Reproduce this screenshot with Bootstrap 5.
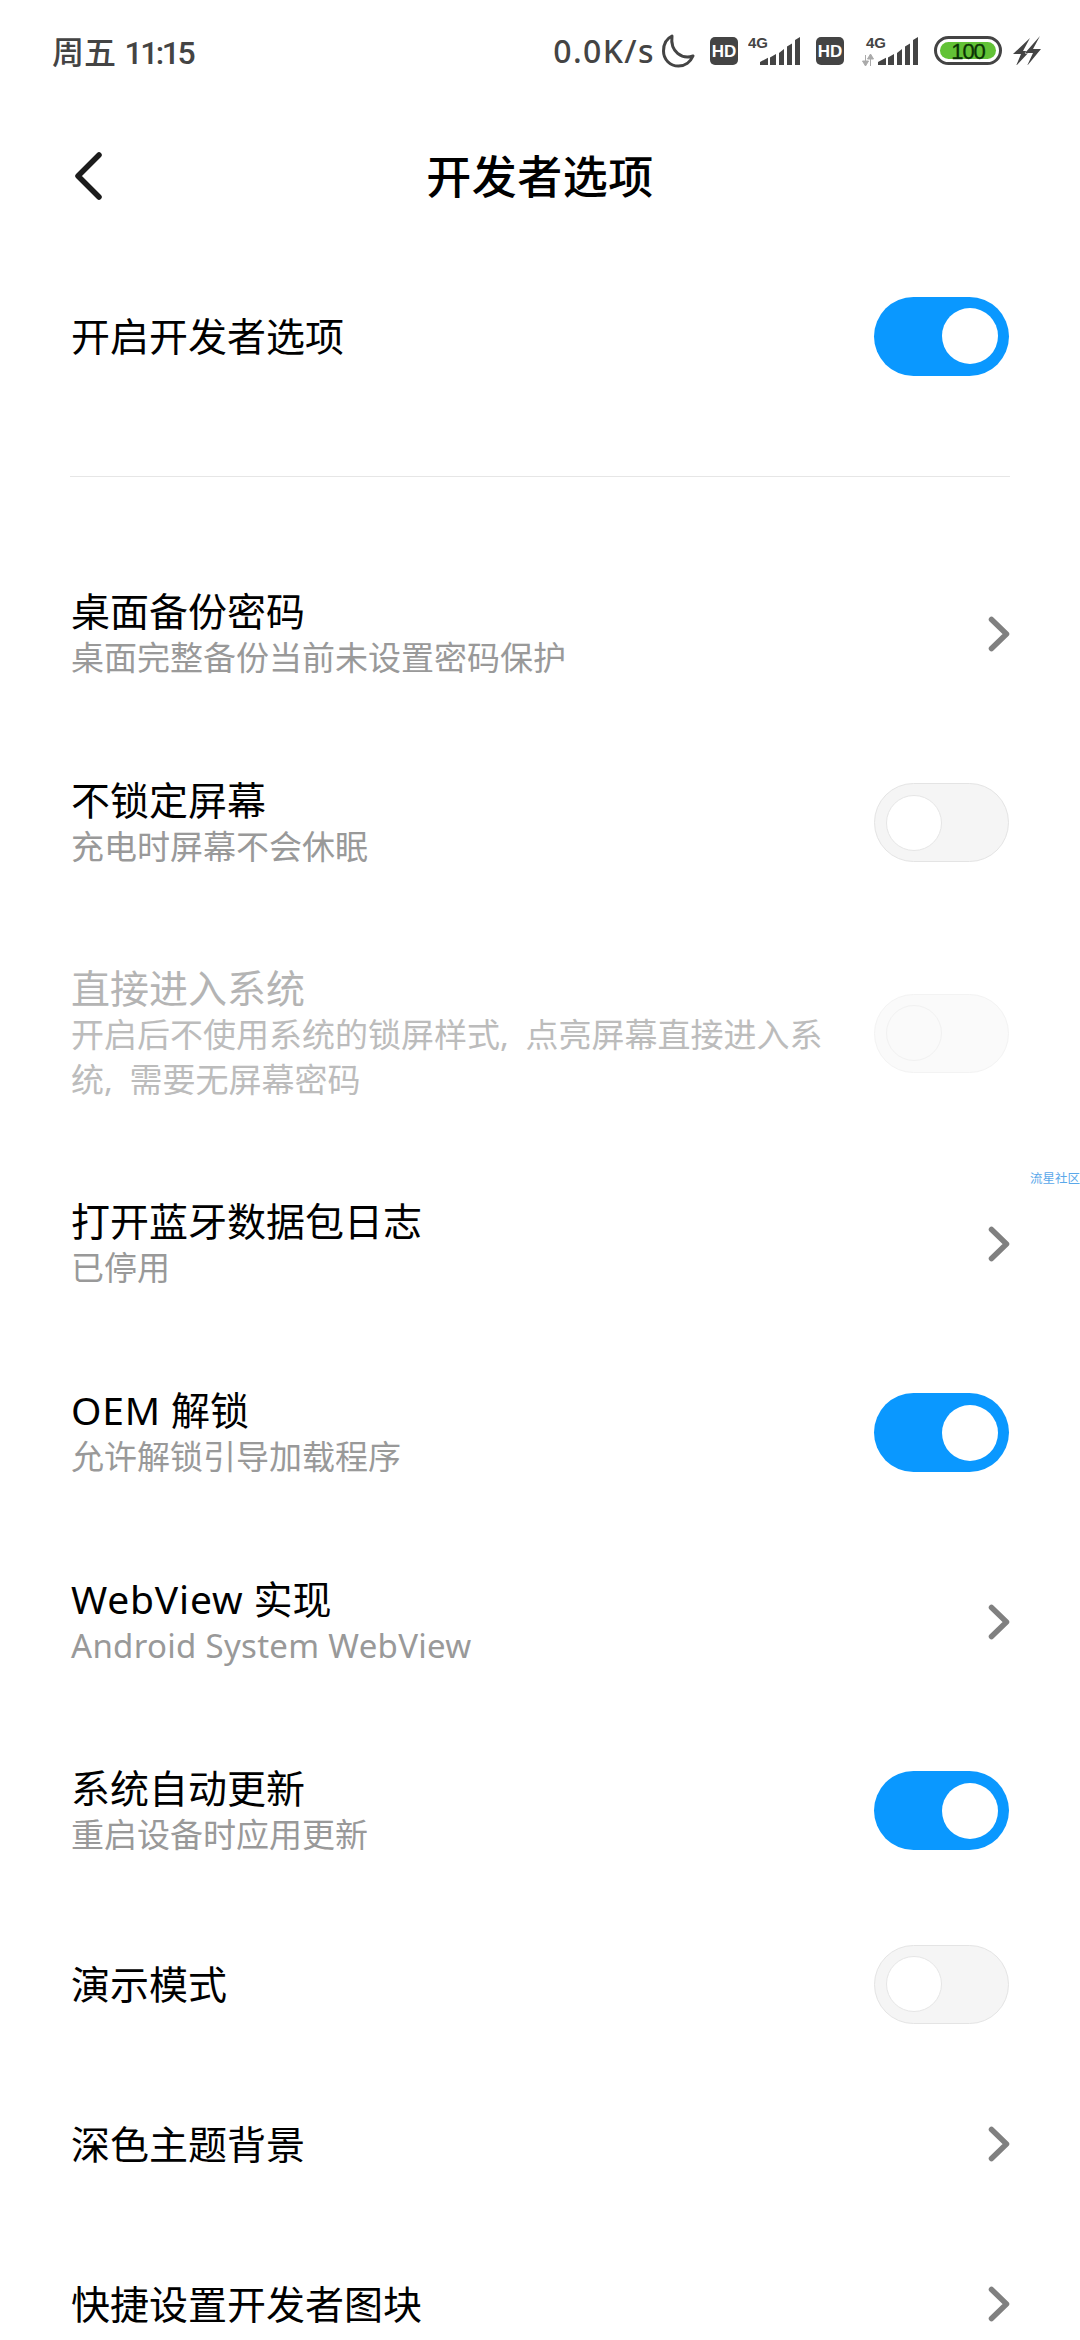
<!DOCTYPE html>
<html lang="zh-CN">
<head>
<meta charset="utf-8">
<title>开发者选项</title>
<link rel="stylesheet" href="https://cdn.jsdelivr.net/npm/bootstrap@5.3.0/dist/css/bootstrap.min.css">
<style>
html,body{height:2340px;overflow:hidden;background:#fff}
body{font-family:"Noto Sans","Noto Sans CJK SC",sans-serif;color:#000;position:relative}
.sbar{height:104px;padding:0 39px 3px 52px;color:#444}
.sbar-time{font-size:32px;font-weight:500;line-height:1;margin-top:3px}
.sbar-num{font-family:Roboto,sans-serif;letter-spacing:-2.5px;margin-left:3px}
.sbar-speed{font-size:32px;font-weight:500;line-height:1;letter-spacing:1.4px;font-family:"Noto Sans",sans-serif}
.sbar svg{display:block;flex:none}
.sbar svg.sig{margin-top:-8px}
.gap-a{margin-left:7px}.gap-b{margin-left:15px}.gap-c{margin-left:10px}.gap-d{margin-left:16px}.gap-e{margin-left:18px}.gap-f{margin-left:11px}
.topbar{height:144px;position:relative}
.back-ic{position:absolute;left:70px;top:46px}
.page-title{font-size:45px;font-weight:500;margin:1px 0 0;line-height:60px;letter-spacing:.5px}
.opt-list{--bs-list-group-bg:transparent;--bs-list-group-border-width:0}
.opt-row{padding:49px 71px 47px 71px;min-height:189px}
.opt-row.solo{padding-top:0;padding-bottom:0;height:160px;min-height:160px}
.opt-row.tall{padding-top:48px;padding-bottom:46px}
.opt-name{font-size:39px;line-height:48px;color:#000}
.opt-sub{font-size:33px;line-height:45px;color:#999;width:770px}
.lat-name{letter-spacing:.8px}
.lat-sub{letter-spacing:.3px}
.wide-words{word-spacing:8px}
.is-off .opt-name{color:#b4b4b4}
.is-off .opt-sub{color:#bcbcbc}
.top-gap{margin-top:8px}
.rule{margin:60px 70px 61px 70px;border-top:1px solid #e6e6e6;opacity:1}
.sw{width:135px;height:79px;border-radius:40px;padding:0 11px;flex:none}
.sw-on{background:#0a98ff;justify-content:flex-end}
.sw-off{background:#f5f5f5;border:1px solid #e4e4e4;justify-content:flex-start}
.sw-dis{background:#fafafa;border:1px solid #f3f3f3;justify-content:flex-start}
.sw-knob{width:56px;height:56px;border-radius:50%;background:#fff;display:block}
.sw-off .sw-knob{border:1px solid #e6e6e6}
.sw-dis .sw-knob{background:#fafafa;border:1px solid #f1f1f1}
.chev{flex:none;display:block;margin-right:-1px}
.wm{position:absolute;right:0;top:1171px;font-size:12.5px;line-height:16px;color:#5aa8ea;white-space:nowrap}
</style>
</head>
<body>

<div class="sbar d-flex align-items-center justify-content-between">
  <div class="sbar-time">周五<span class="sbar-num"> 11:15</span></div>
  <div class="d-flex align-items-center">
    <span class="sbar-speed">0.0K/s</span>
    <svg class="gap-a" width="33" height="34" viewBox="0 0 33 34"><path d="M10 2C3.500 5 1.500 11 1.500 17 1.500 25.500 8 32 16.500 32 23 32 28.500 28 31 22 20 25.500 8 18 10 2Z" fill="none" stroke="#444" stroke-width="3" stroke-linejoin="round"/></svg>
    <svg class="gap-b" width="28" height="28" viewBox="0 0 28 28"><rect width="28" height="28" rx="5" fill="#444"/><text x="14" y="20" text-anchor="middle" font-family="Liberation Sans" font-size="17" font-weight="700" fill="#fff">HD</text></svg>
    <svg class="gap-c sig" width="52" height="38" viewBox="0 -8 52 38"><text x="0" y="11.500" font-family="Liberation Sans" font-size="15" font-weight="700" fill="#444">4G</text><path d="M12 29v-3l8-4.300V29zM22 29v-7.500l6-3.500v11zM31 29V17l5-4v16zM39 29V10.500l5-3V29zM47 29V4l5-3v28z" fill="#444"/></svg>
    <svg class="gap-d" width="28" height="28" viewBox="0 0 28 28"><rect width="28" height="28" rx="5" fill="#444"/><text x="14" y="20" text-anchor="middle" font-family="Liberation Sans" font-size="17" font-weight="700" fill="#fff">HD</text></svg>
    <svg class="gap-e sig" width="56" height="38" viewBox="0 -8 56 38"><text x="4" y="11.500" font-family="Liberation Sans" font-size="15" font-weight="700" fill="#444">4G</text><path d="M3.500 19v6M.5 25h6l-3 5zM8.500 30v-7M5.500 23h6l-3-5z" fill="#aaa" stroke="#aaa" stroke-width="1"/><path d="M16 29v-3l8-4.300V29zM26 29v-7.500l6-3.500v11zM35 29V17l5-4v16zM43 29V10.500l5-3V29zM51 29V4l5-3v28z" fill="#444"/></svg>
    <svg class="gap-d" width="68" height="29" viewBox="0 0 68 29"><rect x="1.500" y="1.500" width="65" height="26" rx="13" fill="#fff" stroke="#444" stroke-width="3"/><rect x="6" y="6" width="56" height="17" rx="8.500" fill="#62c236"/><text x="34" y="22.500" text-anchor="middle" font-family="Liberation Sans" font-size="22" letter-spacing="-1" fill="#0b3305" stroke="#0b3305" stroke-width=".3">100</text></svg>
    <svg class="gap-f" width="28" height="29" viewBox="0 0 28 29"><path d="M17 2 0 18h8L3 30l14-15H10z" fill="#444"/><path d="M27 0 12 17h8l-6 13 14-17h-8z" fill="#444" stroke="#fff" stroke-width="1" paint-order="stroke"/></svg>
  </div>
</div>

<div class="topbar d-flex align-items-center justify-content-center">
  <svg class="back-ic" width="32" height="52" viewBox="0 0 32 52"><path d="M29 5 8 26 29 47" fill="none" stroke="#1c1c1c" stroke-width="5.500" stroke-linecap="round" stroke-linejoin="round"/></svg>
  <h1 class="page-title">开发者选项</h1>
</div>

<div class="top-gap list-group list-group-flush opt-list">
  <div class="list-group-item opt-row solo d-flex align-items-center justify-content-between">
    <div class="opt-name">开启开发者选项</div>
    <span class="sw sw-on d-flex align-items-center"><span class="sw-knob"></span></span>
  </div>
</div>

<hr class="rule">

<div class="list-group list-group-flush opt-list">
  <div class="list-group-item opt-row d-flex align-items-center justify-content-between">
    <div><div class="opt-name">桌面备份密码</div><div class="opt-sub">桌面完整备份当前未设置密码保护</div></div>
    <svg class="chev" width="22" height="36" viewBox="0 0 22 36"><path d="M3.500 3.500 18.500 18 3.500 32.500" fill="none" stroke="#808080" stroke-width="5.500" stroke-linecap="round" stroke-linejoin="round"/></svg>
  </div>
  <div class="list-group-item opt-row d-flex align-items-center justify-content-between">
    <div><div class="opt-name">不锁定屏幕</div><div class="opt-sub">充电时屏幕不会休眠</div></div>
    <span class="sw sw-off d-flex align-items-center"><span class="sw-knob"></span></span>
  </div>
  <div class="list-group-item opt-row tall is-off d-flex align-items-center justify-content-between">
    <div><div class="opt-name">直接进入系统</div><div class="opt-sub wide-words">开启后不使用系统的锁屏样式, 点亮屏幕直接进入系统, 需要无屏幕密码</div></div>
    <span class="sw sw-dis d-flex align-items-center"><span class="sw-knob"></span></span>
  </div>
  <div class="list-group-item opt-row d-flex align-items-center justify-content-between">
    <div><div class="opt-name">打开蓝牙数据包日志</div><div class="opt-sub">已停用</div></div>
    <svg class="chev" width="22" height="36" viewBox="0 0 22 36"><path d="M3.500 3.500 18.500 18 3.500 32.500" fill="none" stroke="#808080" stroke-width="5.500" stroke-linecap="round" stroke-linejoin="round"/></svg>
  </div>
  <div class="list-group-item opt-row d-flex align-items-center justify-content-between">
    <div><div class="opt-name"><span class="lat-name">OEM</span> 解锁</div><div class="opt-sub">允许解锁引导加载程序</div></div>
    <span class="sw sw-on d-flex align-items-center"><span class="sw-knob"></span></span>
  </div>
  <div class="list-group-item opt-row d-flex align-items-center justify-content-between">
    <div><div class="opt-name"><span class="lat-name">WebView</span> 实现</div><div class="opt-sub lat-sub">Android System WebView</div></div>
    <svg class="chev" width="22" height="36" viewBox="0 0 22 36"><path d="M3.500 3.500 18.500 18 3.500 32.500" fill="none" stroke="#808080" stroke-width="5.500" stroke-linecap="round" stroke-linejoin="round"/></svg>
  </div>
  <div class="list-group-item opt-row d-flex align-items-center justify-content-between">
    <div><div class="opt-name">系统自动更新</div><div class="opt-sub">重启设备时应用更新</div></div>
    <span class="sw sw-on d-flex align-items-center"><span class="sw-knob"></span></span>
  </div>
  <div class="list-group-item opt-row solo d-flex align-items-center justify-content-between">
    <div class="opt-name">演示模式</div>
    <span class="sw sw-off d-flex align-items-center"><span class="sw-knob"></span></span>
  </div>
  <div class="list-group-item opt-row solo d-flex align-items-center justify-content-between">
    <div class="opt-name">深色主题背景</div>
    <svg class="chev" width="22" height="36" viewBox="0 0 22 36"><path d="M3.500 3.500 18.500 18 3.500 32.500" fill="none" stroke="#808080" stroke-width="5.500" stroke-linecap="round" stroke-linejoin="round"/></svg>
  </div>
  <div class="list-group-item opt-row solo d-flex align-items-center justify-content-between">
    <div class="opt-name">快捷设置开发者图块</div>
    <svg class="chev" width="22" height="36" viewBox="0 0 22 36"><path d="M3.500 3.500 18.500 18 3.500 32.500" fill="none" stroke="#808080" stroke-width="5.500" stroke-linecap="round" stroke-linejoin="round"/></svg>
  </div>
</div>

<div class="wm">流星社区</div>

<script src="https://cdn.jsdelivr.net/npm/bootstrap@5.3.0/dist/js/bootstrap.bundle.min.js"></script>
</body>
</html>
